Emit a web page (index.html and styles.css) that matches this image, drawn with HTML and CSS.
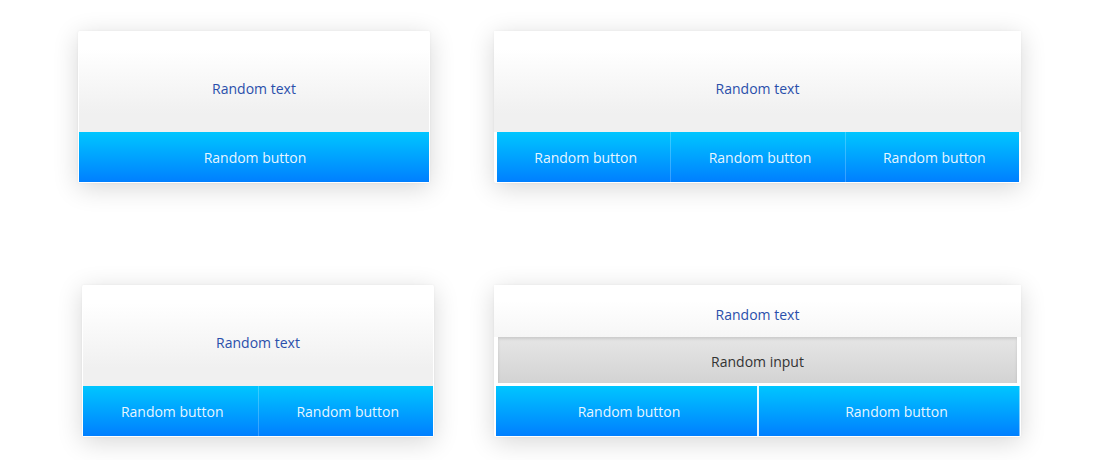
FILE: index.html
```html
<!DOCTYPE html>
<html>
<head>
<meta charset="utf-8">
<link rel="stylesheet" href="styles.css">
</head>
<body>
<main class="page">
  <div class="row row-top">
    <section class="card card-one">
      <div class="head">Random text</div>
      <div class="btns">
        <button class="btn">Random button</button>
      </div>
    </section>
    <section class="card card-three">
      <div class="head">Random text</div>
      <div class="btns">
        <button class="btn">Random button</button>
        <button class="btn">Random button</button>
        <button class="btn">Random button</button>
      </div>
    </section>
  </div>
  <div class="row row-bottom">
    <section class="card card-two">
      <div class="head">Random text</div>
      <div class="btns">
        <button class="btn">Random button</button>
        <button class="btn">Random button</button>
      </div>
    </section>
    <section class="card card-form">
      <div class="head head-short">Random text</div>
      <div class="input">Random input</div>
      <div class="btns btns-form">
        <button class="btn">Random button</button>
        <button class="btn">Random button</button>
      </div>
    </section>
  </div>
</main>
</body>
</html>
```
FILE: styles.css
```css
html, body {
  margin: 0;
  padding: 0;
  background: #ffffff;
}
body {
  width: 1100px;
  height: 460px;
  overflow: hidden;
  font-family: "Open Sans", "Noto Sans", sans-serif;
  font-size: 14px;
}
.page {
  display: flex;
  flex-direction: column;
  padding-top: 31px;
  gap: 102px;
}
.row {
  display: flex;
  align-items: flex-start;
}
.row-top {
  padding-left: 78px;
  gap: 64px;
}
.row-bottom {
  padding-left: 82px;
  gap: 60px;
}
.card {
  background: #ffffff;
  border-radius: 2px;
  box-shadow: 0 5px 26px rgba(0, 0, 0, 0.16), 0 0 3px rgba(0, 0, 0, 0.05);
  padding: 0 1px 1px 1px;
  display: flex;
  flex-direction: column;
}
.card-one,
.card-two {
  width: 350px;
}
.card-three {
  width: 522px;
  padding: 0 2px 1px 3px;
}
.card-form {
  width: 527px;
  padding: 0 0 1px 0;
}
.head {
  height: 101px;
  box-sizing: border-box;
  padding-top: 49px;
  line-height: 18px;
  text-align: center;
  color: #2a4fab;
  background: linear-gradient(#ffffff 18%, #f0f0f0 82%);
}
.card-three .head {
  margin: 0 -2px 0 -3px;
}
.head-short {
  height: 52px;
  padding-top: 21px;
  background: linear-gradient(#ffffff 30%, #f6f6f6 100%);
}
.btns {
  display: flex;
  height: 50px;
}
.btn {
  flex: 1;
  border: 0;
  margin: 0;
  padding: 2px 0 0 4px;
  font: inherit;
  color: rgba(255, 255, 255, 0.92);
  background: linear-gradient(#00c6ff, #007fff);
  line-height: 18px;
  cursor: pointer;
}
.card-one .btn {
  padding-left: 2px;
}
.btn + .btn {
  border-left: 1px solid rgba(255, 255, 255, 0.22);
}
.input {
  margin: 0 4px 3px 4px;
  height: 46px;
  box-sizing: border-box;
  padding-top: 16px;
  line-height: 18px;
  text-align: center;
  color: #333333;
  background: linear-gradient(#e6e6e6, #d3d3d3);
  box-shadow: inset 0 2px 3px rgba(0, 0, 0, 0.12);
}
.btns-form {
  margin: 0 1px 0 2px;
}
.btns-form .btn {
  flex: 0 0 261px;
  box-sizing: border-box;
  padding-left: 5px;
}
.btns-form .btn + .btn {
  flex: 1 1 auto;
  border-left: 2px solid rgba(255, 255, 255, 0.9);
  padding-left: 14px;
}
.btns-form .btn:last-child {
  box-shadow: inset -1px 0 0 rgba(255, 255, 255, 0.5);
}
```
